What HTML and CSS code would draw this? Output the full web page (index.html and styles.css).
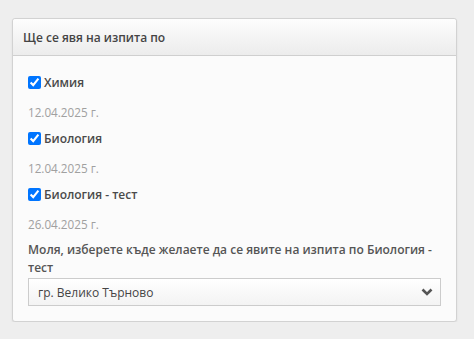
FILE: index.html
```html
<!DOCTYPE html>
<html lang="bg">
<head>
<meta charset="utf-8">
<link rel="stylesheet" href="styles.css">
</head>
<body>
<div class="panel">
  <div class="panel-heading">Ще се явя на изпита по</div>
  <div class="panel-body">
    <div class="exam">
      <label class="check"><input type="checkbox" checked><span>Химия</span></label>
      <div class="date">12.04.2025 г.</div>
    </div>
    <div class="exam">
      <label class="check"><input type="checkbox" checked><span>Биология</span></label>
      <div class="date">12.04.2025 г.</div>
    </div>
    <div class="exam">
      <label class="check"><input type="checkbox" checked><span>Биология - тест</span></label>
      <div class="date">26.04.2025 г.</div>
    </div>
    <label class="field-label" for="place">Моля, изберете къде желаете да се явите на изпита по Биология - тест</label>
    <div class="select-wrap">
      <select id="place" class="select">
        <option>гр. Велико Търново</option>
      </select>
      <svg class="chev" width="12" height="8" viewBox="0 0 12 8"><path d="M1.5 1.5 L6 6 L10.5 1.5" fill="none" stroke="#555" stroke-width="2.6"/></svg>
    </div>
  </div>
</div>
</body>
</html>
```

FILE: styles.css
```css
html, body {
  margin: 0;
  padding: 0;
}
body {
  background: #eeeeee;
  font-family: "Open Sans", "Noto Sans", sans-serif;
  font-size: 13px;
  color: #555;
  padding: 18px 17px 0 12px;
}
.panel {
  background: #fbfbfb;
  border: 1px solid #d2d2d2;
  border-radius: 3px;
  box-shadow: 0 1px 2px rgba(0,0,0,0.08);
}
.panel-heading {
  height: 37px;
  box-sizing: border-box;
  padding: 0 10px;
  display: flex;
  align-items: center;
  font-size: 12px;
  font-weight: 600;
  color: #444;
  background: linear-gradient(#fdfdfd, #ececec);
  border-bottom: 1px solid #cfcfcf;
  border-radius: 3px 3px 0 0;
}
.panel-body {
  padding: 16px 15px 15px 15px;
  display: flex;
  flex-direction: column;
}
.exam {
  display: flex;
  flex-direction: column;
  gap: 10px;
  margin-bottom: 6px;
}
.check {
  display: flex;
  align-items: center;
  height: 20px;
  font-size: 12px;
  font-weight: 600;
  color: #4a4a4a;
}
.check input {
  margin: 0 3px 0 0;
  width: 13px;
  height: 13px;
}
.date {
  height: 20px;
  line-height: 20px;
  font-size: 11.7px;
  color: #a0a0a0;
}
.field-label {
  font-size: 12px;
  font-weight: 600;
  color: #555;
  line-height: 18px;
  margin-top: 1px;
  margin-bottom: 1px;
}
.select-wrap {
  position: relative;
}
.select {
  appearance: none;
  -webkit-appearance: none;
  width: 100%;
  height: 28px;
  box-sizing: border-box;
  border: 1px solid #cccccc;
  border-radius: 0;
  background: linear-gradient(#ffffff, #f3f3f3);
  font-family: "Open Sans", "Noto Sans", sans-serif;
  font-size: 12px;
  color: #444;
  padding: 0 9px;
  margin: 0;
  outline: none;
}
.chev {
  position: absolute;
  right: 8px;
  top: 10px;
  pointer-events: none;
}
```
